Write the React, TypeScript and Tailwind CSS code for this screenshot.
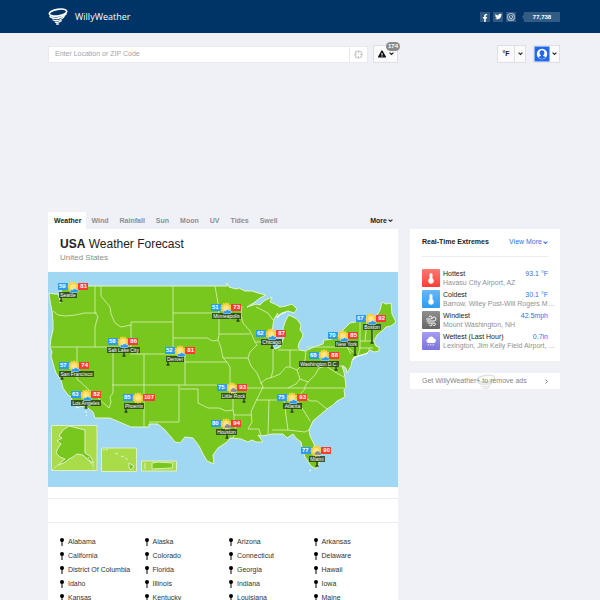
import { ReactNode } from "react";
import { FaExclamationTriangle, FaFacebookF, FaInstagram, FaTwitter } from "react-icons/fa";

type Sky = "sun" | "cloud" | "storm";

interface City {
  name: string;
  min: number;
  max: number;
  sky: Sky;
  x: number;
  y: number;
  labelX: number;
  labelW: number;
  pinX: number;
  pinY: number;
}

// the map uses its own units, starting at 48,272 and 350 x 215 in size
const MAP = { x: 48, y: 272, width: 350, height: 215 };

const cities: City[] = [
  { name: "Seattle", min: 59, max: 81, sky: "cloud", x: 58, y: 283, labelX: 59, labelW: 18, pinX: 61, pinY: 301 },
  { name: "Salt Lake City", min: 58, max: 86, sky: "cloud", x: 108, y: 338, labelX: 107, labelW: 33, pinX: 124, pinY: 356 },
  { name: "San Francisco", min: 57, max: 74, sky: "cloud", x: 59, y: 362, labelX: 59, labelW: 35, pinX: 62, pinY: 379 },
  { name: "Minneapolis", min: 51, max: 73, sky: "cloud", x: 211, y: 304, labelX: 212, labelW: 29, pinX: 238, pinY: 321 },
  { name: "Denver", min: 52, max: 81, sky: "cloud", x: 165, y: 347, labelX: 166, labelW: 18, pinX: 168, pinY: 365 },
  { name: "Chicago", min: 62, max: 87, sky: "cloud", x: 256, y: 330, labelX: 261, labelW: 21, pinX: 272, pinY: 348 },
  { name: "Boston", min: 67, max: 92, sky: "cloud", x: 356, y: 315, labelX: 363, labelW: 18, pinX: 372, pinY: 343 },
  { name: "New York", min: 70, max: 85, sky: "cloud", x: 328, y: 332, labelX: 335, labelW: 23, pinX: 355, pinY: 355 },
  { name: "Washington D.C.", min: 68, max: 88, sky: "cloud", x: 309, y: 352, labelX: 299, labelW: 40, pinX: 336, pinY: 370 },
  { name: "Los Angeles", min: 63, max: 82, sky: "cloud", x: 71, y: 391, labelX: 71, labelW: 30, pinX: 86, pinY: 408 },
  { name: "Phoenix", min: 85, max: 107, sky: "sun", x: 123, y: 394, labelX: 124, labelW: 20, pinX: 126, pinY: 412 },
  { name: "Little Rock", min: 75, max: 93, sky: "storm", x: 217, y: 384, labelX: 221, labelW: 25, pinX: 244, pinY: 402 },
  { name: "Houston", min: 80, max: 94, sky: "storm", x: 211, y: 420, labelX: 216, labelW: 21, pinX: 227, pinY: 438 },
  { name: "Atlanta", min: 75, max: 93, sky: "cloud", x: 277, y: 394, labelX: 283, labelW: 19, pinX: 292, pinY: 412 },
  { name: "Miami", min: 77, max: 90, sky: "storm", x: 301, y: 447, labelX: 309, labelW: 16, pinX: 317, pinY: 466 },
];

const LAND =
  "M60 286H227V283L229 287L236 289L239 288L245 291L252 291L258 293L266 295L260 298L255 302L247 307L256 304L260 305L264 301L272 297L270 302L275 304L280 307L286 306L292 304L297 309L294 313L288 311L282 313L276 317L278 313L274 319L273 325L272 333L272 345L275 349L280 347L284 337L283 328L285 322L287 318L289 315L297 319L301 325L300 330L303 334L302 338L299 343L298 347L300 350L305 351L314 347L323 344L324 340L332 339L340 335L343 330L350 323L360 321L372 320L377 315L380 310L382 302L386 304L391 303L392 314L396 322L391 326L386 327L382 331L377 335L374 341L376 346L379 347L379 351L374 352L370 350L366 354L358 356L354 357L352 361L351 366L347 373L346 368L342 366L344 372L345 378L346 387L344 390L345 397L337 401L333 405L327 409L320 415L313 421L309 430L310 436L314 444L319 457L319 464L316 469L311 466L305 457L302 448L301 442L296 438L293 434L287 438L283 434L272 434L262 436L258 435L263 442L256 442L252 440L248 442L241 439L230 438L227 442L218 448L213 455L214 464L207 461L203 454L199 446L193 438L185 437L180 443L175 442L171 437L165 430L158 424H149V427H131L110 418H95L93 412L88 408L80 406L73 403L71 397L68 395L63 388L61 380L56 373L54 367L51 356L52 352L50 347L51 338L53 330L53 322L52 311L50 301L49 293L54 294L58 294L60 300L62 294Z";

const BORDERS = [
  "M53 311L58 315L66 316L75 315L85 313H97",
  "M95 286V313L98 316L95 327V347",
  "M51 347H131M77 347V379L109 408L111 402L110 397L113 393V347",
  "M101 286V296L110 307L111 314L115 323L121 327L131 325M131 322H173M131 322V354",
  "M131 354H185M144 354V427M112 385H233",
  "M173 286V354M173 313H219M173 338H207L213 341L218 340",
  "M215 286L218 303L219 313V335L218 340L221 348L223 358L227 362L230 367",
  "M185 354V385M185 362H227M219 334H250M219 319V313",
  "M242 306L241 315L243 323L250 331L255 342L257 345L250 352L248 358L251 366L257 373L260 380L263 387L256 401L251 412L252 422L248 429H259L261 436",
  "M223 358H248M255 342H272M256 307L268 313L273 320",
  "M230 367V385L233 388H264M233 388V410L234 415H252M234 415V422L236 431L233 438M180 389H198V403L208 408L219 408L226 411L233 410",
  "M179 385V422H149",
  "M256 400H297L302 398L307 399L311 401H317L327 409M262 388H344",
  "M269 400L268 434M272 430H288L305 432L309 430M284 401L288 430",
  "M297 401L304 411L310 421M306 388L302 392L296 400",
  "M260 384L266 379L273 377L280 374L286 367L290 367L297 370L301 366L305 360L306 350",
  "M273 349V370L271 378M278 350H300M290 350V367M306 347H347L351 354M306 366H344M347 347L353 352",
  "M297 370L300 379L296 384L288 388M300 379L308 382L315 375L319 368L326 366M308 382L304 388M326 366L335 372L344 377",
  "M360 321V349L358 355M367 320L365 341M360 341H374M359 348H373M369 348V352M372 320L373 340M344 366V372",
];

const ALASKA =
  "M59 436L63 430L69 426L77 428L85 430V453L90 456L94 463L88 460L83 455L77 454L73 457L69 459L64 463L58 465L65 459L60 457L56 453L58 448L61 444L57 441L62 438Z";

function Tornado({ className }: { className: string }) {
  return (
    <svg viewBox="0 0 20 17" className={className} fill="none" stroke="currentColor" strokeLinecap="round">
      <ellipse cx="10" cy="4.600" rx="8.800" ry="3.300" strokeWidth="1.600" transform="rotate(-9 10 4.600)" />
      <path d="M2.200 8.600C6 11.800 14 10.600 18 5.800" strokeWidth="1.700" />
      <path d="M5 12c4 1.400 8.500.2 11-3.400M7.200 14.200c2.400.5 4.600 0 6-1.400M8.600 16h1.800" strokeWidth="1.300" />
    </svg>
  );
}

function Chevron() {
  return (
    <svg viewBox="0 0 6 4" className="w-[5px]" fill="none" stroke="currentColor" strokeWidth="1.300">
      <path d="M.7.8L3 2.900 5.300.8" />
    </svg>
  );
}

function SkyIcon({ sky }: { sky: Sky }) {
  return (
    <svg viewBox="0 0 12 12" className="-mx-px h-3 w-3 shrink-0">
      <path
        d="M6 0l1.200 1.700L9 .8l.2 2.100 2.100.1-.9 1.900L12 6l-1.600 1.100.9 1.900-2.100.2L9 11.200l-1.800-.9L6 12l-1.200-1.700L3 11.200l-.2-2-2.100-.2.9-1.900L0 6l1.600-1.100L.7 3l2.100-.1L3 .8l1.800.9z"
        fill="#fcd23c"
      />
      <circle cx="6" cy="6" r="3.200" fill="#ffe684" stroke="#fbc43c" strokeWidth=".4" />
      {sky === "cloud" && (
        <path
          d="M4.500 11.700a1.500 1.500 0 01.1-3c.5-.1.8.2 1 .3a2 2 0 013.500-.6 1.700 1.700 0 011 3.300z"
          fill="#2d9bf0"
          stroke="#e8f5ff"
          strokeWidth=".5"
        />
      )}
      {sky === "storm" && (
        <>
          <path d="M5.500 10a1.400 1.400 0 010-2.700 2 2 0 013.700-.2A1.500 1.500 0 0110 10z" fill="#8b8793" stroke="#ddd" strokeWidth=".3" />
          <path d="M6 10.300l-.4 1.200M8 10.300l-.4 1.200M10 10.300l-.4 1.200" stroke="#fff" strokeWidth=".7" />
        </>
      )}
    </svg>
  );
}

function CityMarker({ city }: { city: City }) {
  const place = (x: number, y: number) => ({
    left: `${((x - MAP.x) / MAP.width) * 100}%`,
    top: `${((y - MAP.y) / MAP.height) * 100}%`,
  });
  return (
    <>
      <div
        className="absolute flex h-[6px] items-center justify-center bg-[#29401c]/85 text-[5px] leading-[6px] whitespace-nowrap text-white"
        style={{ ...place(city.labelX, city.y + 9), width: `${(city.labelW / MAP.width) * 100}%` }}
      >
        {city.name}
      </div>
      <div className="absolute flex h-[7px] items-center text-[6px] leading-[7px] font-bold text-white" style={place(city.x, city.y)}>
        <span className="w-[10px] bg-[#2b9bf4] pl-px">{city.min}</span>
        <SkyIcon sky={city.sky} />
        <span className="min-w-[10px] bg-[#fb3b36] px-px text-right">{city.max}</span>
      </div>
    </>
  );
}

function UsaMap() {
  return (
    <div className="relative aspect-[350/215] overflow-hidden bg-[#a0d8f3]">
      <svg viewBox="48 272 350 215" className="block w-full" strokeLinejoin="round" fill="none">
        <path d={LAND} fill="#78c71e" stroke="#e4f3cf" strokeWidth="1" />
        <path d={BORDERS.join("")} stroke="#d2ecae" strokeWidth="0.9" />
        <path d="M352 360L358 356L368 353M277 318L281 314L286 312M60 296V303M76 407l3 1M85 411l2 2M86 415l1 1M309 471l2-1" stroke="#fff" strokeWidth="1" />
        <g stroke="#dff0c4">
          <path d="M51.500 425.500H97V470.500H51.500ZM101.500 448H136.500V471.500H101.500ZM141.500 461H176.500V471H141.500Z" fill="#a8dc48" />
          <path d={ALASKA} fill="#78c71e" />
          <path d="M52 470L58 465M84 456L95 466M88 457L94 469" strokeDasharray="2 1" />
          <path d="M129 463L134 466L131 470L129 468ZM115 453l3 1M121 456l3 1M125 458l3 2M103 450l2 0M106 449l2 1" fill="#78c71e" />
          <path d="M152 463L158 462L173 463L172 468L152 469ZM145 463v6" fill="#78c71e" />
        </g>
        {cities.map((c) => (
          <path key={c.name} d={`M${c.pinX} ${c.y + 13}V${c.pinY}M${c.pinX - 1.5} ${c.pinY}h3`} stroke="#29401c" strokeWidth="1.400" />
        ))}
      </svg>
      {cities.map((c) => (
        <CityMarker key={c.name} city={c} />
      ))}
    </div>
  );
}

function Header() {
  return (
    <header className="flex h-[33px] items-center justify-between bg-[#003366] pr-10 pl-12 text-white">
      <a href="#" className="flex items-center">
        <Tornado className="h-[17px] w-5" />
        <span className="ml-[7px] font-['Open_Sans',sans-serif] text-[9px] leading-3 font-medium">WillyWeather</span>
      </a>
      <div className="flex items-center gap-[3px]">
        <a href="#" aria-label="Facebook" className="flex size-[10px] items-end justify-center bg-[#2f5982]">
          <FaFacebookF className="size-[8px]" />
        </a>
        <a href="#" aria-label="Twitter" className="flex size-[10px] items-center justify-center bg-[#2f5982]">
          <FaTwitter className="size-[7px]" />
        </a>
        <a href="#" aria-label="Instagram" className="flex size-[10px] items-center justify-center bg-[#2f5982]">
          <FaInstagram className="size-[8px]" />
        </a>
        <div className="ml-[3px] flex items-center">
          <svg viewBox="0 0 2 6" className="h-[6px] w-[2px]" fill="#335c85">
            <path d="M2 0v6L0 3z" />
          </svg>
          <span className="h-[10px] w-9 bg-[#335c85] text-center text-[6px] leading-[10px] font-bold">77,738</span>
        </div>
      </div>
    </header>
  );
}

function Toolbar() {
  return (
    <div className="mt-3 flex h-[18px] items-center">
      <form className="flex h-[17px] w-80 border border-[#e9eaee] bg-white">
        <input
          aria-label="Location"
          placeholder="Enter Location or ZIP Code"
          className="min-w-0 flex-1 px-[6px] text-[7px] placeholder:text-[#a4a4a4]"
        />
        <button type="button" aria-label="Use my location" className="flex w-[18px] items-center justify-center border-l border-[#e9eaee]">
          <svg viewBox="0 0 10 10" className="size-[9px]" fill="none" stroke="#c6c6c6">
            <circle cx="5" cy="5" r="3.800" strokeWidth="1.200" />
            <path d="M5 1v2.500M5 6.500v2.500M1 5h2.500M6.500 5h2.500" />
          </svg>
        </button>
      </form>
      <button className="relative ml-[5px] flex h-[18px] w-[25px] items-center justify-center gap-[3px] border border-[#dfe0e4] bg-[#fafafa] text-[#111]">
        <FaExclamationTriangle className="size-[8px]" />
        <Chevron />
        <span className="absolute -top-1 left-3 rounded-full bg-[#8b8b8b] px-[2px] text-[6px] leading-[9px] font-bold text-white">174</span>
      </button>
      <button className="ml-auto flex h-[18px] items-stretch border border-[#dfe0e4] bg-[#fafafa]">
        <span className="w-4 text-center text-[7px] leading-4 font-bold">°F</span>
        <span className="flex w-[11px] items-center justify-center border-l border-[#dfe0e4]">
          <Chevron />
        </span>
      </button>
      <button aria-label="Account" className="ml-[7px] flex h-[18px] items-center border border-[#dfe0e4] bg-[#fafafa]">
        <svg viewBox="0 0 16 16" className="size-4" fill="#2268e8">
          <path d="M.500.500h15v15h-15z" />
          <circle cx="8" cy="8" r="5.200" fill="#fff" />
          <path d="M8 4.200a2.400 2.600 0 00-2.400 2.600c0 1.200.5 2 1.200 2.500v.8c-.9.300-1.900.6-2.500 1.200a5 5 0 007.400 0c-.6-.6-1.600-.9-2.500-1.200v-.8c.7-.5 1.200-1.300 1.200-2.500A2.400 2.600 0 008 4.200z" />
        </svg>
        <span className="flex w-[9px] items-center justify-center">
          <Chevron />
        </span>
      </button>
    </div>
  );
}

const tabs = ["Weather", "Wind", "Rainfall", "Sun", "Moon", "UV", "Tides", "Swell"];

function Tabs() {
  return (
    <nav className="flex h-[17px] items-stretch gap-px text-[7px] leading-[17px] font-bold text-[#8b8f94]">
      {tabs.map((tab, i) => (
        <a key={tab} href="#" className={i === 0 ? "bg-white pr-1 pl-[6px] text-[#222]" : "px-[5px]"}>
          {tab}
        </a>
      ))}
      <button className="mr-[5px] ml-auto flex items-center gap-px text-[#222]">
        More <Chevron />
      </button>
    </nav>
  );
}

const states = [
  "Alabama", "Alaska", "Arizona", "Arkansas",
  "California", "Colorado", "Connecticut", "Delaware",
  "District Of Columbia", "Florida", "Georgia", "Hawaii",
  "Idaho", "Illinois", "Indiana", "Iowa",
  "Kansas", "Kentucky", "Louisiana", "Maine",
];

function StateList() {
  return (
    <ul className="grid grid-cols-4 pt-3 pl-3 text-[7px] leading-[14px] text-[#333]">
      {states.map((state) => (
        <li key={state}>
          <a href="#" className="flex items-center gap-1 whitespace-nowrap">
            <svg viewBox="0 0 4 8" className="h-2 w-1">
              <circle cx="2" cy="2" r="2" fill="#000" />
              <path d="M2 3v5" stroke="#000" />
            </svg>
            {state}
          </a>
        </li>
      ))}
    </ul>
  );
}

function Thermometer() {
  return (
    <svg viewBox="0 0 18 18" className="size-[18px]">
      <path d="M7.500 5.500a1.500 1.500 0 013 0v4a2.800 2.800 0 11-3 0z" fill="#fff" />
    </svg>
  );
}

function WindIcon() {
  return (
    <svg viewBox="0 0 18 18" className="size-[18px]" fill="none" stroke="#fff" strokeLinecap="round">
      <path d="M4.500 8h4a1.500 1.500 0 10-1.500-2M5 10h7a2 2 0 10-2-2.500M6 12h2.500a1.400 1.400 0 11-1 2.200M10 12h2a1.300 1.300 0 11-1 2" />
    </svg>
  );
}

function RainIcon() {
  return (
    <svg viewBox="0 0 18 18" className="size-[18px]">
      <path d="M6.500 11a2.200 2.200 0 01-.4-4.300 3.200 3.200 0 016-.2A2.300 2.300 0 0112 11z" fill="#fff" />
      <path d="M6.500 12l-.6 1.500M9 12l-.6 1.500M11.500 12l-.6 1.500" stroke="#fff" strokeWidth=".8" />
    </svg>
  );
}

interface ExtremeProps {
  title: string;
  place: string;
  value: string;
  color: string;
  icon: ReactNode;
}

function Extreme({ title, place, value, color, icon }: ExtremeProps) {
  return (
    <li className="flex h-[18px] gap-[3px]">
      <div className={`size-[18px] shrink-0 rounded-[1px] bg-linear-to-b ${color}`}>{icon}</div>
      <div className="min-w-0 flex-1">
        <div className="flex justify-between">
          <span className="text-[#222]">{title}</span>
          <a href="#" className="text-[#2f74e8]">{value}</a>
        </div>
        <div className="whitespace-nowrap text-[#919191]">{place}</div>
      </div>
    </li>
  );
}

function Sidebar() {
  return (
    <aside className="min-w-0 pt-[17px]">
      <section className="h-[132px] bg-white px-3 text-[7px]">
        <div className="flex h-7 items-center justify-between border-b border-[#ececee]">
          <h2 className="font-bold whitespace-nowrap text-[#222]">Real-Time Extremes</h2>
          <a href="#" className="flex items-center gap-px whitespace-nowrap text-[#2f74e8]">
            View More <Chevron />
          </a>
        </div>
        <ul className="mt-3 flex flex-col gap-[3px] leading-[9px]">
          <Extreme title="Hottest" place="Havasu City Airport, AZ" value="93.1 °F" color="from-[#ff7770] to-[#fb3c34]" icon={<Thermometer />} />
          <Extreme title="Coldest" place="Barrow, Wiley Post-Will Rogers M…" value="30.1 °F" color="from-[#66b8f9] to-[#2b9bf0]" icon={<Thermometer />} />
          <Extreme title="Windiest" place="Mount Washington, NH" value="42.5mph" color="from-[#8f8f8f] to-[#666666]" icon={<WindIcon />} />
          <Extreme title="Wettest (Last Hour)" place="Lexington, Jim Kelly Field Airport, …" value="0.7in" color="from-[#a49df0] to-[#7c74dc]" icon={<RainIcon />} />
        </ul>
      </section>
      <a href="#" className="relative mt-3 flex h-4 items-center justify-between overflow-hidden bg-white px-3 text-[7px] text-[#858585]">
        <Tornado className="absolute top-px left-[66px] h-[17px] w-5 text-[#e4e4e4]" />
        <span className="relative whitespace-nowrap">Get WillyWeather+ to remove ads</span>
        <svg viewBox="0 0 3 5" className="h-[5px] w-[3px]" fill="none" stroke="currentColor">
          <path d="M.500.500l2 2-2 2" />
        </svg>
      </a>
    </aside>
  );
}

function App() {
  return (
    <div className="h-screen overflow-hidden bg-[#f0f1f6] font-['Liberation_Sans',sans-serif] text-[#222]">
      <Header />
      <div className="pr-10 pl-12">
        <Toolbar />
        <div className="mt-[149px] grid grid-cols-[7fr_3fr] gap-3">
          <main className="min-w-0">
            <Tabs />
            <div className="bg-white">
              <div className="h-[43px] px-3 pt-2">
                <h1 className="text-[12px] leading-[14px]">
                  <b>USA</b> Weather Forecast
                </h1>
                <p className="text-[8px] leading-[13px] text-[#8d8d8d]">United States</p>
              </div>
              <UsaMap />
              <div className="h-3 border-b border-[#ececef]" />
              <div className="h-6 border-b border-[#ececef]" />
              <StateList />
            </div>
          </main>
          <Sidebar />
        </div>
      </div>
    </div>
  );
}

export default App;
